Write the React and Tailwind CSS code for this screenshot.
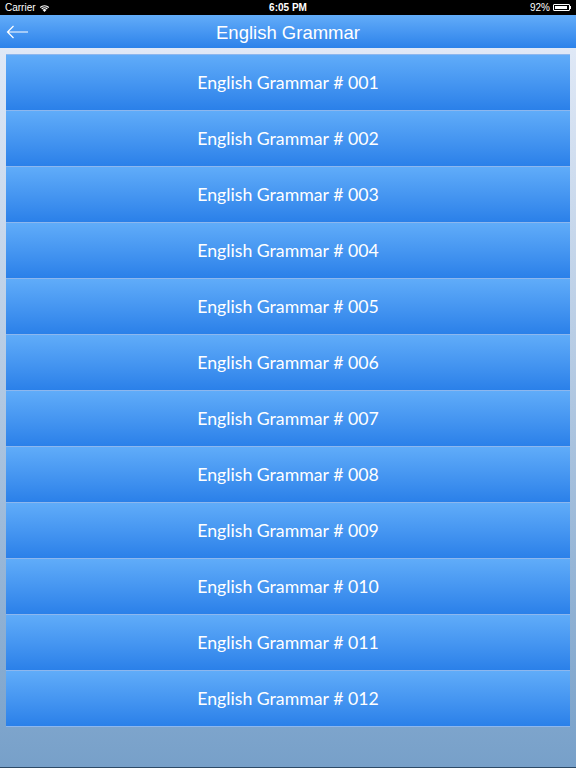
import React from 'react'

const lessons = Array.from({ length: 12 }, (_, i) => String(i + 1).padStart(3, '0'))

function StatusBar() {
  return (
    <div className="relative flex h-[15px] items-center justify-between bg-black px-[5px] text-[10px] leading-none text-white" style={{ fontFamily: '"Liberation Sans", Arial, sans-serif' }}>
      <div className="flex items-center gap-[3px]">
        <span>Carrier</span>
        <svg width="11" height="9" viewBox="0 0 11 9" fill="white">
          <path d="M5.5 9 L3.6 6.9 A2.8 2.8 0 0 1 7.4 6.9 Z" />
          <path d="M2.3 5.6 A4.6 4.6 0 0 1 8.7 5.6 L7.9 6.4 A3.5 3.5 0 0 0 3.1 6.4 Z" />
          <path d="M0.8 4.1 A6.8 6.8 0 0 1 10.2 4.1 L9.4 4.9 A5.7 5.7 0 0 0 1.6 4.9 Z" />
        </svg>
      </div>
      <span className="absolute left-1/2 -translate-x-1/2 font-bold">6:05 PM</span>
      <div className="flex items-center gap-[3px]">
        <span>92%</span>
        <div className="flex items-center">
          <div className="h-[7px] w-[17px] rounded-[1px] border border-white p-[1px]">
            <div className="h-full w-[92%] bg-white" />
          </div>
          <div className="h-[3px] w-[1px] bg-white" />
        </div>
      </div>
    </div>
  )
}

function NavBar() {
  return (
    <div className="relative flex h-[33px] items-center justify-center bg-gradient-to-b from-[#62acf9] to-[#2b82ea]">
      <svg className="absolute left-[6px] top-[10px]" width="23" height="14" viewBox="0 0 23 14" fill="none" stroke="white" strokeWidth="1.2">
        <path d="M22 7 H1.5 M7.5 1 L1.5 7 L7.5 13" />
      </svg>
      <h1 className="pt-[2px] text-[18.5px] text-white" style={{ fontFamily: '"Liberation Sans", Arial, sans-serif' }}>English Grammar</h1>
    </div>
  )
}

export default function App() {
  return (
    <div className="flex h-[768px] w-[576px] flex-col overflow-hidden bg-gradient-to-b from-[#e6edf9] via-[#b3c9e2] to-[#77a0c9]">
      <StatusBar />
      <NavBar />
      <div className="mx-[6px] mt-[6px] flex flex-col border-b border-[#8db7ee]">
        {lessons.map((n) => (
          <button
            key={n}
            className="flex h-[56px] items-center justify-center border-t border-[#8db7ee] bg-gradient-to-b from-[#60acf9] to-[#2a80e9] pt-[2px] text-[17.7px] text-white"
            style={{ fontFamily: 'Lato, "Open Sans", sans-serif' }}
          >
            English Grammar # {n}
          </button>
        ))}
      </div>
      <div className="mt-auto h-[1px] bg-[#2d4a66]" />
    </div>
  )
}
